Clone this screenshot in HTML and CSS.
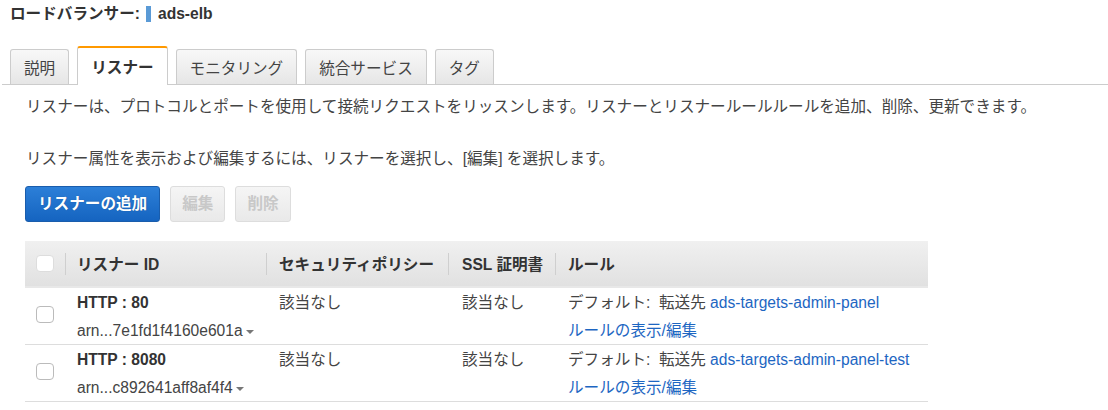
FILE: index.html
```html
<!DOCTYPE html>
<html lang="ja">
<head>
<meta charset="utf-8">
<title>ロードバランサー</title>
<link rel="stylesheet" href="styles.css">
</head>
<body>
<div class="title">
  <span>ロードバランサー:</span>
  <span class="bar"></span>
  <span>ads-elb</span>
</div>
<div class="tabs">
  <div class="tab">説明</div>
  <div class="tab active">リスナー</div>
  <div class="tab">モニタリング</div>
  <div class="tab">統合サービス</div>
  <div class="tab">タグ</div>
</div>
<div class="content">
  <p class="desc">リスナーは、プロトコルとポートを使用して接続リクエストをリッスンします。リスナーとリスナールールルールを追加、削除、更新できます。</p>
  <p class="desc second">リスナー属性を表示および編集するには、リスナーを選択し、[編集] を選択します。</p>
  <div class="actions">
    <button class="btn primary">リスナーの追加</button>
    <button class="btn disabled">編集</button>
    <button class="btn disabled">削除</button>
  </div>
  <div class="table">
    <div class="thead">
      <div class="th c1"><span class="check"></span></div>
      <div class="th c2"><span class="sep"></span>リスナー ID</div>
      <div class="th c3"><span class="sep"></span>セキュリティポリシー</div>
      <div class="th c4"><span class="sep"></span>SSL 証明書</div>
      <div class="th c5"><span class="sep"></span>ルール</div>
    </div>
    <div class="row">
      <div class="td c1"><span class="check row-check"></span></div>
      <div class="td c2">
        <div class="line strong">HTTP : 80</div>
        <div class="line second-line">arn...7e1fd1f4160e601a<span class="caret"></span></div>
      </div>
      <div class="td c3"><div class="line">該当なし</div></div>
      <div class="td c4"><div class="line">該当なし</div></div>
      <div class="td c5">
        <div class="line">デフォルト:&nbsp; 転送先 <a class="link">ads-targets-admin-panel</a></div>
        <div class="line second-line"><a class="link">ルールの表示/編集</a></div>
      </div>
    </div>
    <div class="row">
      <div class="td c1"><span class="check row-check"></span></div>
      <div class="td c2">
        <div class="line strong">HTTP : 8080</div>
        <div class="line second-line">arn...c892641aff8af4f4<span class="caret"></span></div>
      </div>
      <div class="td c3"><div class="line">該当なし</div></div>
      <div class="td c4"><div class="line">該当なし</div></div>
      <div class="td c5">
        <div class="line">デフォルト:&nbsp; 転送先 <a class="link">ads-targets-admin-panel-test</a></div>
        <div class="line second-line"><a class="link">ルールの表示/編集</a></div>
      </div>
    </div>
  </div>
</div>
</body>
</html>
```

FILE: styles.css
```css
* { box-sizing: border-box; }
body {
  margin: 0;
  background: #fff;
  color: #444;
  font-family: "Liberation Sans", "Noto Sans CJK JP", sans-serif;
  font-size: 15.6px;
}
.title {
  display: flex;
  align-items: center;
  padding: 4px 10px 0;
  height: 24px;
  line-height: 20px;
  font-weight: bold;
  color: #333;
}
.title .bar {
  display: inline-block;
  width: 5px;
  height: 16px;
  background: #5a9ad6;
  margin: 0 7px 0 6px;
}
.tabs {
  display: flex;
  align-items: flex-end;
  gap: 8px;
  margin: 22px 0 0 2px;
  padding-left: 8px;
  border-bottom: 1px solid #ccc;
  height: 39px;
}
.tab {
  height: 35px;
  padding: 0 13px;
  display: flex;
  align-items: center;
  border: 1px solid #ccc;
  border-bottom: none;
  border-radius: 3px 3px 0 0;
  background: linear-gradient(#f8f8f8, #e6e6e6);
  color: #444;
}
.tab.active {
  height: 39px;
  padding: 0 13px 1px;
  background: #fff;
  border-top: 2px solid #f90;
  font-weight: bold;
  color: #333;
  margin-bottom: -1px;
}
.content {
  padding: 0 0 0 25px;
}
.desc {
  margin: 11px 0 0 1px;
  line-height: 22px;
  color: #444;
}
.desc.second {
  margin-top: 30px;
}
.actions {
  display: flex;
  gap: 10px;
  margin-top: 16px;
}
.btn {
  font-family: inherit;
  font-size: 15.6px;
  font-weight: bold;
  height: 36px;
  border-radius: 3px;
  line-height: 1;
}
.btn.primary {
  padding: 0 12px;
  color: #fff;
  background: linear-gradient(#2c7fd8, #1564c0);
  border: 1px solid #1a5dac;
  text-shadow: 0 0 1px rgba(0,0,0,0.3);
}
.btn.disabled {
  padding: 0 11px;
  color: #c8c8c8;
  background: linear-gradient(#f5f5f5, #e9e9e9);
  border: 1px solid #ddd;
}
.table {
  margin-top: 19px;
  width: 903px;
}
.thead {
  display: flex;
  height: 47px;
  background: linear-gradient(#f0f0f0, #e1e1e1);
  border-bottom: 2px solid #e8e8e8;
  font-weight: bold;
  color: #333;
}
.th {
  position: relative;
  display: flex;
  align-items: center;
  padding-bottom: 1px;
}
.sep {
  position: absolute;
  left: 0;
  top: 12px;
  height: 22px;
  width: 1px;
  background: #cfcfcf;
}
.c1 { width: 40px; padding-left: 11px; }
.c2 { width: 201px; padding-left: 12px; }
.c3 { width: 182px; padding-left: 13px; }
.c4 { width: 107px; padding-left: 14px; }
.c5 { width: 373px; padding-left: 13px; }
.check {
  display: inline-block;
  width: 18px;
  height: 17px;
  border: 1px solid #ddd;
  border-radius: 4px;
  background: #fff;
}
.row {
  display: flex;
  border-bottom: 1px solid #ddd;
  height: 57px;
}
.td {
  padding-top: 3px;
  color: #444;
}
.td.c1 {
  display: flex;
  align-items: center;
  padding-top: 0;
  padding-bottom: 3px;
}
.row-check {
  border-color: #bbb;
}
.line {
  line-height: 24px;
  white-space: nowrap;
}
.second-line { margin-top: 4px; }
.strong { font-weight: bold; color: #333; }
.link {
  color: #1d66c2;
  text-decoration: none;
}
.caret {
  display: inline-block;
  width: 0;
  height: 0;
  margin-left: 3px;
  vertical-align: middle;
  border-left: 4px solid transparent;
  border-right: 4px solid transparent;
  border-top: 4px solid #777;
}
```
